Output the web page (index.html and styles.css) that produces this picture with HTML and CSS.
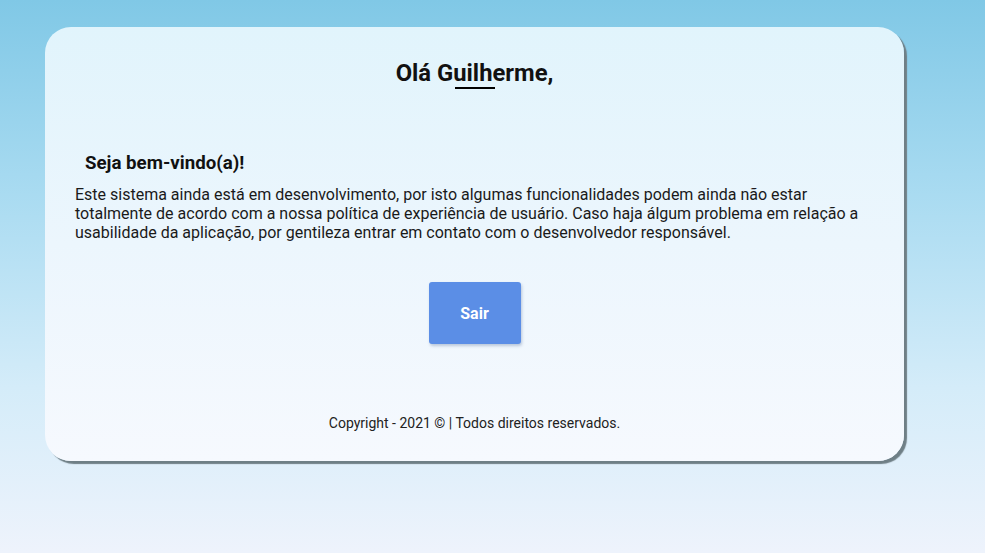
FILE: index.html
```html
<!DOCTYPE html>
<html lang="pt-BR">
<head>
<meta charset="utf-8">
<title>Início</title>
<link rel="stylesheet" href="styles.css">
</head>
<body>
<div class="page">
  <main class="card">
    <h1 class="title">Olá Guilherme,</h1>
    <section class="welcome">
      <h2 class="subtitle">Seja bem-vindo(a)!</h2>
      <p class="text">Este sistema ainda está em desenvolvimento, por isto algumas funcionalidades podem ainda não estar totalmente de acordo com a nossa política de experiência de usuário. Caso haja álgum problema em relação a usabilidade da aplicação, por gentileza entrar em contato com o desenvolvedor responsável.</p>
    </section>
    <div class="actions">
      <button class="btn" type="button">Sair</button>
    </div>
    <footer class="footer">Copyright - 2021 © | Todos direitos reservados.</footer>
  </main>
</div>
</body>
</html>
```

FILE: styles.css
```css
* { box-sizing: border-box; }
html, body {
  margin: 0;
  height: 100%;
}
body {
  font-family: Roboto, "Liberation Sans", Arial, sans-serif;
  color: #111;
  background: linear-gradient(180deg, #80c8e6 0%, #a9dbf1 35%, #d4ecf9 70%, #eef3fc 100%);
}
.page {
  padding: 27px 0 0 45px;
  height: 100%;
}
.card {
  width: 859px;
  height: 434px;
  border-radius: 26px;
  background: linear-gradient(180deg, #e1f4fc 0%, #ecf6fd 50%, #f6f9fe 100%);
  box-shadow: 3px 3px 1px #6f7f86;
  padding: 32px 30px 0 30px;
  display: flex;
  flex-direction: column;
}
.title {
  margin: 0;
  text-align: center;
  font-size: 23.8px;
  font-weight: 700;
  line-height: 28px;
  display: flex;
  flex-direction: column;
  align-items: center;
}
.title::after {
  content: "";
  width: 40px;
  height: 2px;
  background: #000;
}
.welcome {
  margin-top: 63px;
}
.subtitle {
  margin: 0 0 11px 10px;
  font-size: 18.7px;
  font-weight: 700;
  line-height: 22px;
}
.text {
  margin: 0;
  font-size: 16px;
  line-height: 19px;
  color: #1a1a1a;
}
.actions {
  display: flex;
  justify-content: center;
  margin-top: 40px;
}
.btn {
  width: 92px;
  height: 62px;
  border: 0;
  border-radius: 3px;
  background: #5b8ee6;
  color: #fff;
  font-family: inherit;
  font-size: 16px;
  font-weight: 700;
  box-shadow: 1px 2px 3px rgba(60, 90, 140, 0.3);
}
.footer {
  margin-top: 70px;
  text-align: center;
  font-size: 14px;
  line-height: 18px;
  color: #222;
}
```
